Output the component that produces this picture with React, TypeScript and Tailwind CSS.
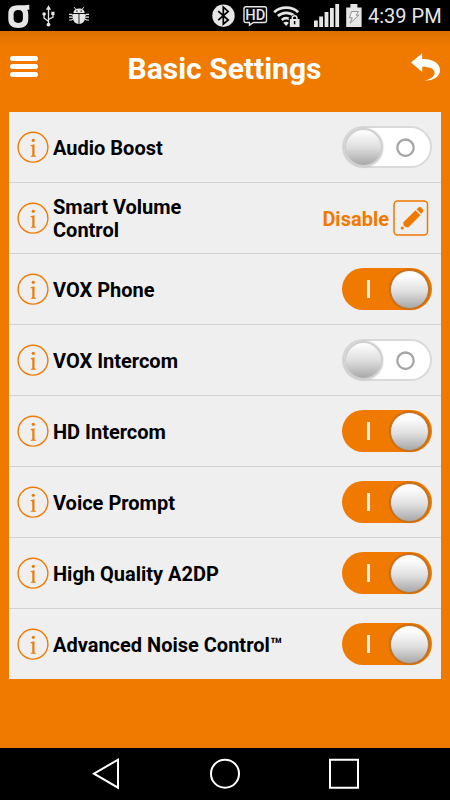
type Setting = {
  label: string
  kind: 'toggle' | 'edit'
  on?: boolean
  value?: string
}

const settings: Setting[] = [
  { label: 'Audio Boost', kind: 'toggle', on: false },
  { label: 'Smart Volume Control', kind: 'edit', value: 'Disable' },
  { label: 'VOX Phone', kind: 'toggle', on: true },
  { label: 'VOX Intercom', kind: 'toggle', on: false },
  { label: 'HD Intercom', kind: 'toggle', on: true },
  { label: 'Voice Prompt', kind: 'toggle', on: true },
  { label: 'High Quality A2DP', kind: 'toggle', on: true },
  { label: 'Advanced Noise Control™', kind: 'toggle', on: true },
]

function StatusBar() {
  return (
    <div className="flex h-[31px] items-center bg-black pr-[9px] pl-2 text-[#e6e6e6]">
      <svg width="22" height="31" viewBox="0 0 22 31">
        <path
          fillRule="evenodd"
          d="M21.300 4.700v5h-2.100c.8 1.300 1.100 2.900 1.100 5v4.200c0 6-3.600 9-10 9s-10-3-10-9v-4.700C.3 8.300 3.300 5.500 9.500 5.300c5 0 9-.1 11.800-.6ZM10.300 9.900c-3.300 0-4.700 1.500-4.700 4.700v3.700c0 3.200 1.400 4.600 4.700 4.600s4.600-1.400 4.600-4.600v-3.700c0-3.200-1.300-4.700-4.600-4.700Z"
          fill="currentColor"
        />
      </svg>

      <svg className="ml-3" width="13" height="31" viewBox="0 0 13 31" fill="none" stroke="currentColor" strokeWidth="1.300">
        <path d="M6.500 9v15M6.500 21.500L2 18V14M6.500 19.500L11 17V14" />
        <path d="M3.900 9.800L6.500 5.300l2.600 4.500ZM9.300 11.800h3.200V15H9.300Z" fill="currentColor" stroke="none" />
        <circle cx="2.100" cy="14" r="1.800" fill="currentColor" stroke="none" />
        <circle cx="6.500" cy="24.600" r="1.900" fill="currentColor" stroke="none" />
      </svg>

      <svg className="ml-[14px]" width="20" height="31" viewBox="0 0 20 31">
        <path d="M4.400 13c0-2.700 2-4.500 5.600-4.500s5.600 1.800 5.600 4.500Z" fill="currentColor" />
        <path d="M6.900 9.500L5.300 7.200M13.100 9.500l1.600-2.300" stroke="currentColor" />
        <path d="M4 14h5.600v9.900C6 23.600 4 21 4 18ZM10.400 14H16v4c0 3-2 5.600-5.600 5.900Z" fill="currentColor" />
        <path d="M4 15.500L2.500 14.300H0M4 17.200H0M4 19L2.500 20H0M16 15.500l1.500-1.200H20M16 17.200h4M16 19l1.500 1H20" fill="none" stroke="currentColor" strokeWidth="1.200" />
        <path d="M7.300 11.200h1.200M11.600 11.200h1.200" stroke="#000" strokeWidth="1.200" />
      </svg>

      <svg className="ml-auto" width="23" height="31" viewBox="0 0 23 31">
        <circle cx="11.500" cy="15.700" r="11.200" fill="currentColor" />
        <path d="M6.200 11.200l10 8.800-4.900 4.200V7.200l4.900 4.200-10 8.800" fill="none" stroke="#000" strokeWidth="1.700" />
      </svg>

      <svg className="ml-2" width="25" height="31" viewBox="0 0 25 31">
        <path
          d="M3 6.700h18.500q2 0 2 2v11.800q0 2-2 2H10.500l-4 2.700v-2.700H3q-2 0-2-2V8.700q0-2 2-2Z"
          fill="none"
          stroke="currentColor"
          strokeWidth="1.400"
        />
        <text
          x="12.300"
          y="20"
          textAnchor="middle"
          textLength="20"
          lengthAdjust="spacingAndGlyphs"
          fontSize="15.500"
          fontWeight="500"
          fill="currentColor"
        >
          HD
        </text>
      </svg>

      <svg className="ml-[5px]" width="28" height="31" viewBox="0 0 28 31" fill="none" stroke="currentColor">
        <path d="M1.200 12.200c6.500-6 17.500-6 24 0M4.900 16.100c4.700-4.300 11.900-4.300 16.600 0M8.800 20c2.700-2.300 6-2.300 8.700 0" strokeWidth="2.700" />
        <path d="M10.200 22.700q3-2 5.900 0L13.200 26Z" fill="currentColor" stroke="none" />
        <path d="M15.700 17.500H18c0-4 7-4 7 0h2V28H15.700Z" fill="#000" stroke="none" />
        <path d="M19.300 19.500V18c0-3 4.600-3 4.600 0v1.500" strokeWidth="1.500" />
        <path d="M16.800 19h9.700v8h-9.700Z" fill="currentColor" stroke="none" />
        <path d="M21.600 21v3.300" stroke="#000" strokeWidth="1.500" />
      </svg>

      <svg className="ml-[12px]" width="27" height="31" viewBox="0 0 27 31" fill="currentColor">
        <path d="M1 20.500h3.800V27H1ZM6.200 16.500H10V27H6.200ZM11.600 12h3.800v15h-3.800ZM17 8h3.800v19H17ZM22.300 4h3.800v23h-3.800Z" />
      </svg>

      <svg className="ml-[6px]" width="16" height="31" viewBox="0 0 16 31">
        <path d="M4.400 4h7v3.400h4.200V27H.2V7.400h4.200Z" fill="currentColor" />
        <path d="M5.500 11.500h6.800l-2.100 3.700h2.600l-8.700 8 2.200-5.400H3.500Z" fill="#f2f2f2" stroke="#888" strokeWidth=".9" />
      </svg>

      <span className="ml-[6px] w-[73px] pt-px text-[20px] leading-[31px] whitespace-nowrap">4:39 PM</span>
    </div>
  )
}

function Header() {
  return (
    <header className="flex h-[81px] items-start justify-between bg-linear-to-b from-[#df7000] to-[#f07a00] to-20% pr-[9px] pl-[10px] text-white">
      <button type="button" aria-label="Menu" className="mt-[25px] flex h-[21px] w-[28px] flex-col justify-between">
        <span className="h-[5px] w-full rounded-full bg-white" />
        <span className="h-[5px] w-full rounded-full bg-white" />
        <span className="h-[5px] w-full rounded-full bg-white" />
      </button>
      <h1 className="mt-[20px] text-[30px] leading-[36px] font-bold">Basic Settings</h1>
      <button type="button" aria-label="Back" className="mt-[22px]">
        <svg width="30" height="29" viewBox="0 0 30 29">
          <path d="M0 9.500L11.200.2v5.700C22 5.800 29 10.300 29 17c0 6.300-5.800 10.600-15.800 10.900 6.900-2.100 10.400-4.700 10.400-8 0-4-4.400-6.100-12.400-6.100v5.100Z" fill="white" />
        </svg>
      </button>
    </header>
  )
}

function InfoIcon() {
  return (
    <svg className="shrink-0" width="32" height="32" viewBox="0 0 32 32" fill="#f07a00">
      <circle cx="16" cy="16.200" r="14.900" fill="none" stroke="#f07a00" strokeWidth="1.400" />
      <circle cx="16.300" cy="9.300" r="1.600" />
      <path d="M13.600 14.300l3.900-1.100v11.400l1.500.5v.7h-5.200v-.7l1.500-.5v-9.100l-1.700-.4Z" />
    </svg>
  )
}

function Toggle({ on }: { on: boolean }) {
  return (
    <button
      type="button"
      role="switch"
      aria-checked={on}
      className={`flex h-[42px] w-[90.500px] items-center justify-between rounded-full ${
        on ? 'bg-[#f07a00] pr-[3px] pl-[25px]' : 'border-2 border-[#d9d9d9] bg-white pr-[15px] pl-0'
      }`}
    >
      {on && <span className="h-[18px] w-[3px] bg-[#f6eee6]" />}
      <span
        className={`size-[39px] rounded-full bg-linear-to-b ${
          on
            ? 'border border-[#b47b42] from-[#fcfcfc] from-15% via-[#e0e0e0] via-55% to-[#a8a8a8] shadow-[0_0_2px_#874500]'
            : 'border-2 border-[#cfcfcf] from-[#fcfcfc] from-5% via-[#dedede] via-50% to-[#a8a8a8] shadow-[0_0_2px_#bbb]'
        }`}
      />
      {!on && (
        <svg width="19" height="19" viewBox="0 0 19 19">
          <circle cx="9.500" cy="9.700" r="8.200" fill="none" stroke="#a6a6a6" strokeWidth="2.300" />
        </svg>
      )}
    </button>
  )
}

function EditButton() {
  return (
    <button type="button" aria-label="Edit">
      <svg width="36" height="36" viewBox="0 0 36 36" fill="#f07a00">
        <rect x="1" y="1" width="33.500" height="34" rx="3.500" fill="none" stroke="#f07a00" strokeWidth="1.500" />
        <path d="M10.200 22.500L22.500 10.200l5 5L15.200 27.400l-3-.6-1.500-1.500Z" />
        <path d="M23.500 9.200l2-1.800q1.500-1 3 .3l1 1q1.400 1.500.3 3l-1.600 2.200Z" />
        <circle cx="9.300" cy="28" r="1.600" />
      </svg>
    </button>
  )
}

export default function App() {
  return (
    <div className="flex h-[800px] w-[450px] flex-col overflow-hidden bg-[#f07a00] font-['Roboto',sans-serif]">
      <StatusBar />
      <Header />
      <main className="mr-[9px] ml-[8.500px] flex-1">
        <div className="bg-[#efefef]">
          {settings.map((s) => (
            <div key={s.label} className="flex h-[71px] items-center border-b border-[#d2d2d2] pr-[9px] pl-2 last:h-[70px] last:border-b-0">
              <InfoIcon />
              <span className="ml-[4.500px] max-w-[230px] pt-[2px] text-[20px] leading-[23px] font-bold text-black">
                {s.kind === 'edit' ? <span className="block w-[150px]">{s.label}</span> : s.label}
              </span>
              <div className="ml-auto flex items-center">
                {s.kind === 'toggle' ? (
                  <Toggle on={!!s.on} />
                ) : (
                  <div className="flex items-center gap-1 pr-[3px]">
                    <span className="pt-[2px] text-[20px] font-bold text-[#f07a00]">{s.value}</span>
                    <EditButton />
                  </div>
                )}
              </div>
            </div>
          ))}
        </div>
      </main>
      <nav className="flex h-[52px] items-center bg-black">
        <svg width="450" height="52" viewBox="0 0 450 52" fill="none" stroke="white" strokeWidth="2">
          <path d="M94 25.700L118 11.700v28Z" />
          <circle cx="225" cy="25.700" r="14" />
          <path d="M330 11.700h28v28h-28Z" />
        </svg>
      </nav>
    </div>
  )
}
